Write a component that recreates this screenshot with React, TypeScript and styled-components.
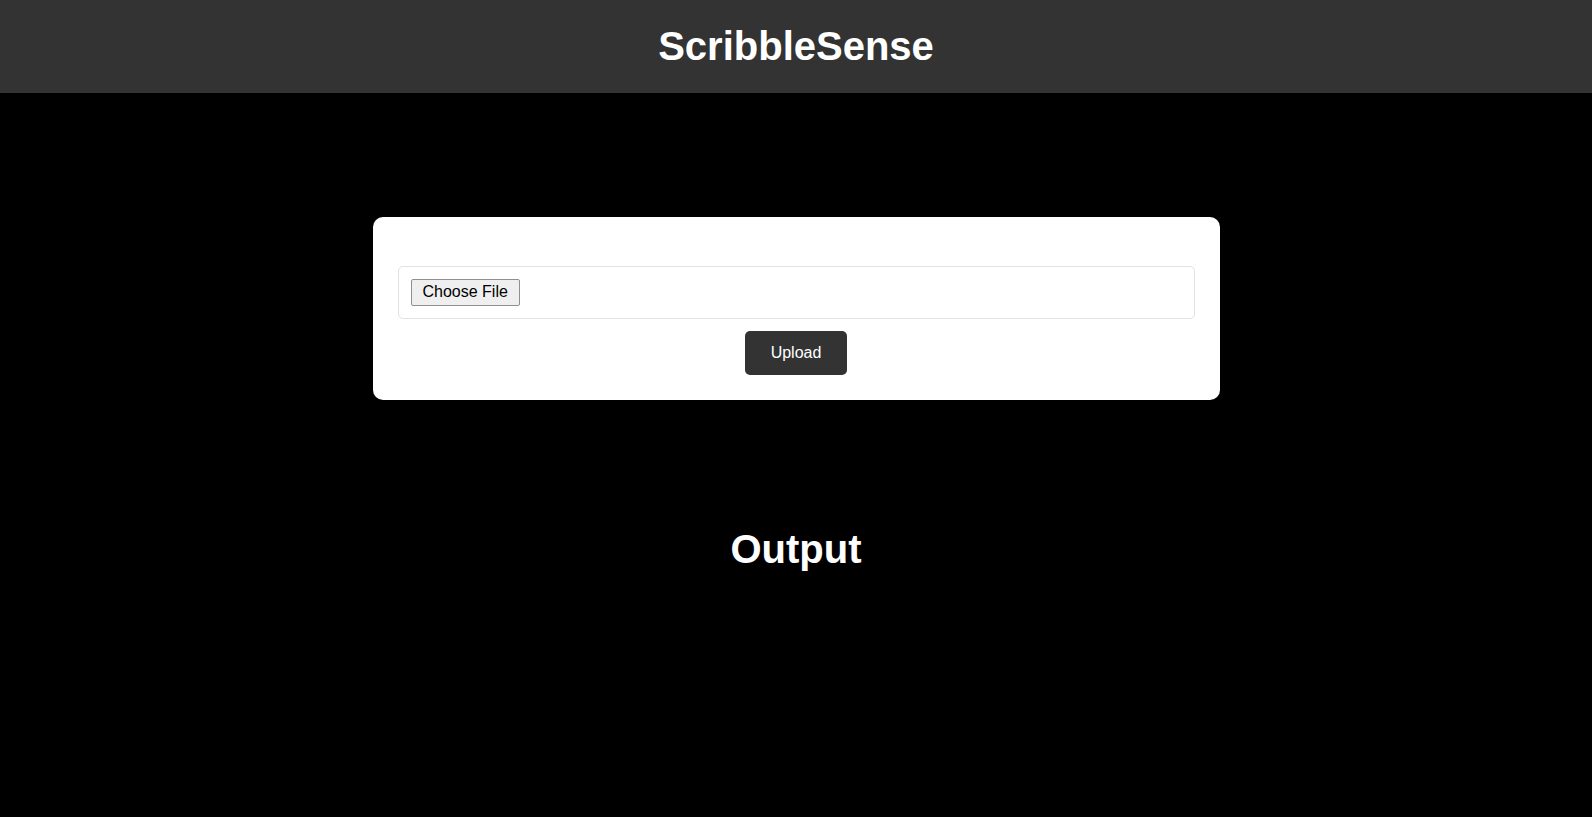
import styled, { createGlobalStyle } from "styled-components";

const GlobalStyle = createGlobalStyle`
  html, body {
    margin: 0;
    padding: 0;
    background: #000;
    font-family: "Liberation Sans", Arial, sans-serif;
  }
`;

const Header = styled.header`
  background-color: #333;
  padding: 23px 0 24px;
  text-align: center;
`;

const Title = styled.h1`
  margin: 0;
  font-size: 40px;
  line-height: 46px;
  font-weight: 700;
  color: #fff;
`;

const Main = styled.main`
  display: flex;
  flex-direction: column;
  align-items: center;
  padding-top: 124px;
`;

const Card = styled.div`
  width: 797px;
  padding: 49px 25px 25px;
  background: #fff;
  border-radius: 10px;
`;

const UploadForm = styled.form`
  display: flex;
  flex-direction: column;
  align-items: center;
  gap: 12px;
`;

const FileInput = styled.input`
  box-sizing: border-box;
  width: 100%;
  padding: 12px;
  border: 1px solid #e2e2e2;
  border-radius: 5px;
  font: 16px "Liberation Sans", Arial, sans-serif;
  color: transparent;
  background: #fff;

  &::file-selector-button {
    margin: 0;
    padding: 3px 11px 4px;
    font: 16px "Liberation Sans", Arial, sans-serif;
    color: #000;
    background: #efefef;
    border: 1px solid #8f8f8f;
    border-radius: 2px;
    cursor: pointer;
  }
`;

const UploadButton = styled.button`
  height: 44px;
  padding: 0 26px;
  border: none;
  border-radius: 5px;
  background-color: #333;
  color: #fff;
  font: 16px "Liberation Sans", Arial, sans-serif;
  cursor: pointer;
`;

const OutputHeading = styled.h2`
  margin: 126px 0 0;
  font-size: 40px;
  line-height: 46px;
  font-weight: 700;
  color: #fff;
  text-align: center;
`;

export default function App() {
  return (
    <>
      <GlobalStyle />
      <Header>
        <Title>ScribbleSense</Title>
      </Header>
      <Main>
        <Card>
          <UploadForm onSubmit={(e) => e.preventDefault()}>
            <FileInput type="file" accept="image/*" />
            <UploadButton type="submit">Upload</UploadButton>
          </UploadForm>
        </Card>
        <OutputHeading>Output</OutputHeading>
      </Main>
    </>
  );
}
